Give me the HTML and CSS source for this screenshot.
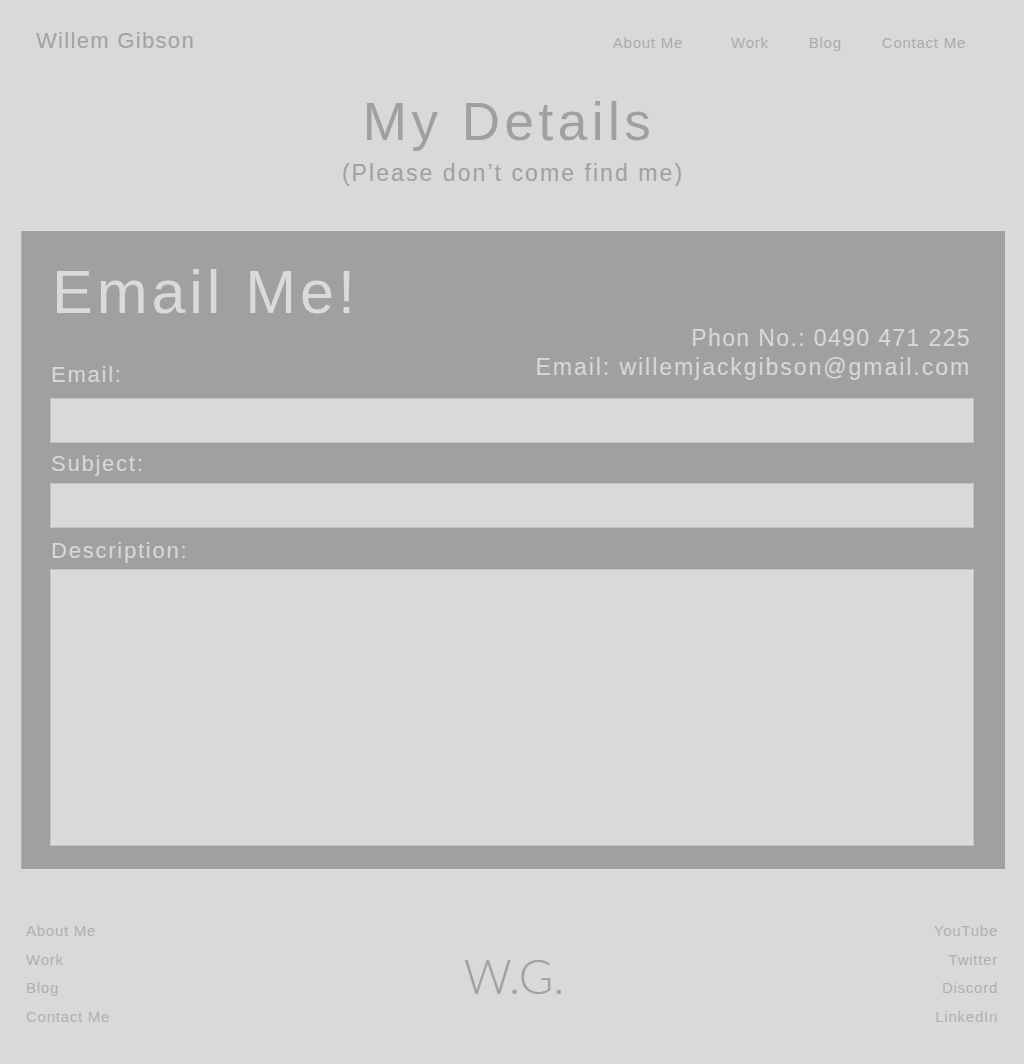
FILE: index.html
```html
<!DOCTYPE html>
<html lang="en">
<head>
<meta charset="utf-8">
<title>My Details - Willem Gibson</title>
<link rel="stylesheet" href="styles.css">
</head>
<body>
<header class="site-header">
  <a class="brand" href="#">Willem Gibson</a>
  <nav class="main-nav">
    <a href="#" class="nav-link nav-first">About Me</a>
    <a href="#" class="nav-link">Work</a>
    <a href="#" class="nav-link">Blog</a>
    <a href="#" class="nav-link">Contact Me</a>
  </nav>
</header>

<section class="intro">
  <h1 class="intro-title">My Details</h1>
  <p class="intro-sub">(Please don’t come find me)</p>
</section>

<section class="panel">
  <h2 class="panel-title">Email Me!</h2>
  <div class="label-row">
    <label class="field-label field-label-first" for="email">Email:</label>
    <div class="contact-info">
      <p>Phon No.: 0490 471 225</p>
      <p>Email: willemjackgibson@gmail.com</p>
    </div>
  </div>
  <input class="field-input" id="email" type="text">
  <label class="field-label field-label-subject" for="subject">Subject:</label>
  <input class="field-input" id="subject" type="text">
  <label class="field-label field-label-desc" for="desc">Description:</label>
  <textarea class="field-area" id="desc"></textarea>
</section>

<footer class="site-footer">
  <ul class="footer-links">
    <li><a href="#">About Me</a></li>
    <li><a href="#">Work</a></li>
    <li><a href="#">Blog</a></li>
    <li><a href="#">Contact Me</a></li>
  </ul>
  <div class="footer-logo">W.G.</div>
  <ul class="footer-links footer-links-right">
    <li><a href="#">YouTube</a></li>
    <li><a href="#">Twitter</a></li>
    <li><a href="#">Discord</a></li>
    <li><a href="#">LinkedIn</a></li>
  </ul>
</footer>
</body>
</html>
```

FILE: styles.css
```css
* { box-sizing: border-box; }

body {
  margin: 0;
  background: #d9d9d9;
  font-family: "Liberation Sans", Arial, sans-serif;
  color: #a0a0a0;
}

a { text-decoration: none; color: inherit; }

.site-header {
  display: flex;
  justify-content: space-between;
  align-items: baseline;
  padding: 28px 58px 0 36px;
}

.brand {
  font-size: 22px;
  line-height: 26px;
  letter-spacing: 0.06em;
  color: #a2a2a2;
}

.main-nav {
  display: flex;
  gap: 40px;
}

.nav-link {
  font-size: 15px;
  line-height: 18px;
  letter-spacing: 0.05em;
  color: #ababab;
}

.nav-first { margin-right: 8px; }

.intro {
  text-align: center;
  margin-top: 39px;
}

.intro-title {
  margin: 0 0 0 -6px;
  font-size: 53px;
  line-height: 1.1;
  font-weight: normal;
  letter-spacing: 0.085em;
  color: #a0a0a0;
}

.intro-sub {
  margin: 8px 0 0 2px;
  font-size: 23px;
  line-height: 28px;
  letter-spacing: 0.09em;
  color: #a0a0a0;
}

.panel {
  margin: 44px 0 0 21px;
  width: 984px;
  background: #a0a0a0;
  border-left: 1px solid #b0b0b0;
  padding: 31px 31px 23px 28px;
  display: flex;
  flex-direction: column;
  color: #d9d9d9;
}

.panel-title {
  margin: 0 0 0 2px;
  font-size: 61px;
  line-height: 1;
  font-weight: normal;
  letter-spacing: 0.065em;
  color: #dadada;
}

.label-row {
  display: flex;
  justify-content: space-between;
  align-items: flex-start;
  margin-bottom: 10px;
}

.contact-info {
  margin: 1px 3px 0 0;
  text-align: right;
  font-size: 23px;
  line-height: 28.6px;
  color: #d9d9d9;
}

.contact-info p { margin: 0; letter-spacing: 0.085em; }
.contact-info p:first-child { letter-spacing: 0.06em; }

.field-label {
  display: block;
  margin-left: 1px;
  font-size: 22px;
  line-height: 26px;
  letter-spacing: 0.08em;
  color: #d9d9d9;
}

.field-label-first { margin-top: 39px; }
.field-label-subject { margin-top: 8px; margin-bottom: 6px; }
.field-label-desc { margin-top: 10px; margin-bottom: 5px; }

.field-input,
.field-area {
  display: block;
  width: 100%;
  margin: 0;
  background: #d9d9d9;
  border: 1px solid #c4c4c4;
  font: inherit;
  resize: none;
}

.field-input { height: 45px; }
.field-area { height: 277px; }

.site-footer {
  display: flex;
  justify-content: space-between;
  align-items: center;
  padding: 48px 26px 33px;
}

.footer-links {
  list-style: none;
  margin: 0;
  padding: 0;
  width: 200px;
}

.footer-links li {
  font-size: 15px;
  line-height: 28.5px;
  letter-spacing: 0.05em;
  color: #b0b0b0;
}

.footer-links-right { text-align: right; }

.footer-logo {
  font-family: "Lato", "Liberation Sans", sans-serif;
  font-weight: 300;
  font-size: 47px;
  line-height: 1;
  letter-spacing: 0;
  color: #a0a0a0;
  margin: 4px 0 0 4px;
}
```
